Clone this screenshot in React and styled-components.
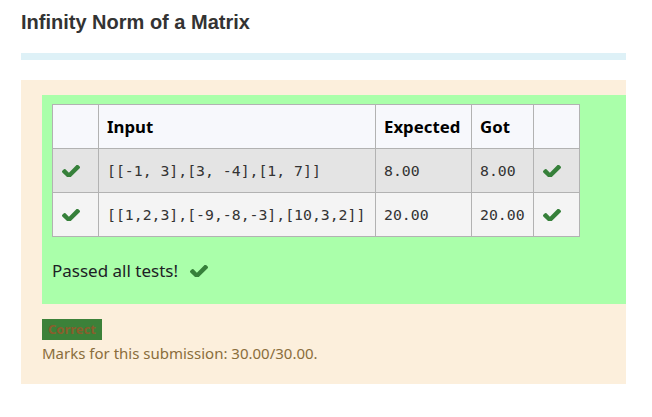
import React from "react";
import styled, { createGlobalStyle } from "styled-components";

const GlobalStyle = createGlobalStyle`
  html, body { margin: 0; padding: 0; background: #ffffff; }
  body { font-family: "Noto Sans", "Open Sans", sans-serif; color: #1d2125; }
`;

const Page = styled.div`
  padding: 10px 26px 0 21px;
`;

const Title = styled.h2`
  margin: 0;
  font-family: "Liberation Sans", Arial, sans-serif;
  font-weight: 700;
  font-size: 20px;
  line-height: 24px;
  color: #333333;
`;

const Divider = styled.div`
  margin-top: 19px;
  height: 7px;
  background: #def1f7;
`;

const Outcome = styled.div`
  margin-top: 20px;
  background: #fcefdc;
  padding: 15px 0 20px 21px;
`;

const Results = styled.div`
  background: #aaffaa;
  padding: 9px 10px 20px 10px;
`;

const Table = styled.table`
  border-collapse: collapse;
  font-family: "Noto Sans", "Open Sans", sans-serif;
`;

const HeadCell = styled.th`
  background: #f7f8fc;
  border: 1px solid #b2b2b2;
  height: 43px;
  padding: 0 8px;
  text-align: left;
  font-size: 16.8px;
  font-weight: 700;
  color: #000000;
  width: ${(p) => p.$w}px;
  box-sizing: content-box;
`;

const Row = styled.tr`
  background: ${(p) => (p.$odd ? "#e4e4e4" : "#f4f4f4")};
`;

const Cell = styled.td`
  border: 1px solid #b2b2b2;
  height: 43px;
  padding: 0 8px;
  vertical-align: middle;
  font-family: "DejaVu Sans Mono", "Liberation Mono", monospace;
  font-size: 14.8px;
  color: #333333;
  white-space: pre;
`;

const IconCell = styled.td`
  border: 1px solid #b2b2b2;
  height: 43px;
  padding: 0 8px 0 9px;
  vertical-align: middle;
`;

const CheckSvg = styled.svg`
  display: block;
  width: 18px;
  height: 12px;
  fill: #36803a;
`;

const Check = ({ className }) => (
  <CheckSvg className={className} viewBox="121 362 1550 1030">
    <path d="M1671 566q0 40-28 68l-724 724-136 136q-28 28-68 28t-68-28l-136-136-362-362q-28-28-28-68t28-68l136-136q28-28 68-28t68 28l294 295 656-657q28-28 68-28t68 28l136 136q28 28 28 68z" />
  </CheckSvg>
);

const Passed = styled.p`
  margin: 21px 0 0 0;
  display: flex;
  align-items: center;
  gap: 12px;
  font-size: 17px;
  line-height: 25.5px;
  color: #1d2125;
`;

const Badge = styled.div`
  display: inline-block;
  margin-top: 15px;
  background: #3c8139;
  color: #8a5d2c;
  font-weight: 700;
  font-size: 13px;
  line-height: 21px;
  height: 21px;
  padding: 0 6px;
`;

const Marks = styled.div`
  margin-top: 2px;
  font-size: 15px;
  line-height: 22.5px;
  color: #8a6d3b;
`;

const rows = [
  { input: "[[-1, 3],[3, -4],[1, 7]]", expected: "8.00", got: "8.00" },
  { input: "[[1,2,3],[-9,-8,-3],[10,3,2]]", expected: "20.00", got: "20.00" },
];

export default function App() {
  return (
    <>
      <GlobalStyle />
      <Page>
        <Title>Infinity Norm of a Matrix</Title>
        <Divider />
        <Outcome>
          <Results>
            <Table>
              <thead>
                <tr>
                  <HeadCell $w={29} />
                  <HeadCell $w={260}>Input</HeadCell>
                  <HeadCell $w={79}>Expected</HeadCell>
                  <HeadCell $w={43}>Got</HeadCell>
                  <HeadCell $w={29} />
                </tr>
              </thead>
              <tbody>
                {rows.map((r, i) => (
                  <Row key={i} $odd={i % 2 === 0}>
                    <IconCell>
                      <Check />
                    </IconCell>
                    <Cell>{r.input}</Cell>
                    <Cell>{r.expected}</Cell>
                    <Cell>{r.got}</Cell>
                    <IconCell>
                      <Check />
                    </IconCell>
                  </Row>
                ))}
              </tbody>
            </Table>
            <Passed>
              Passed all tests!
              <Check />
            </Passed>
          </Results>
          <Badge>Correct</Badge>
          <Marks>Marks for this submission: 30.00/30.00.</Marks>
        </Outcome>
      </Page>
    </>
  );
}
